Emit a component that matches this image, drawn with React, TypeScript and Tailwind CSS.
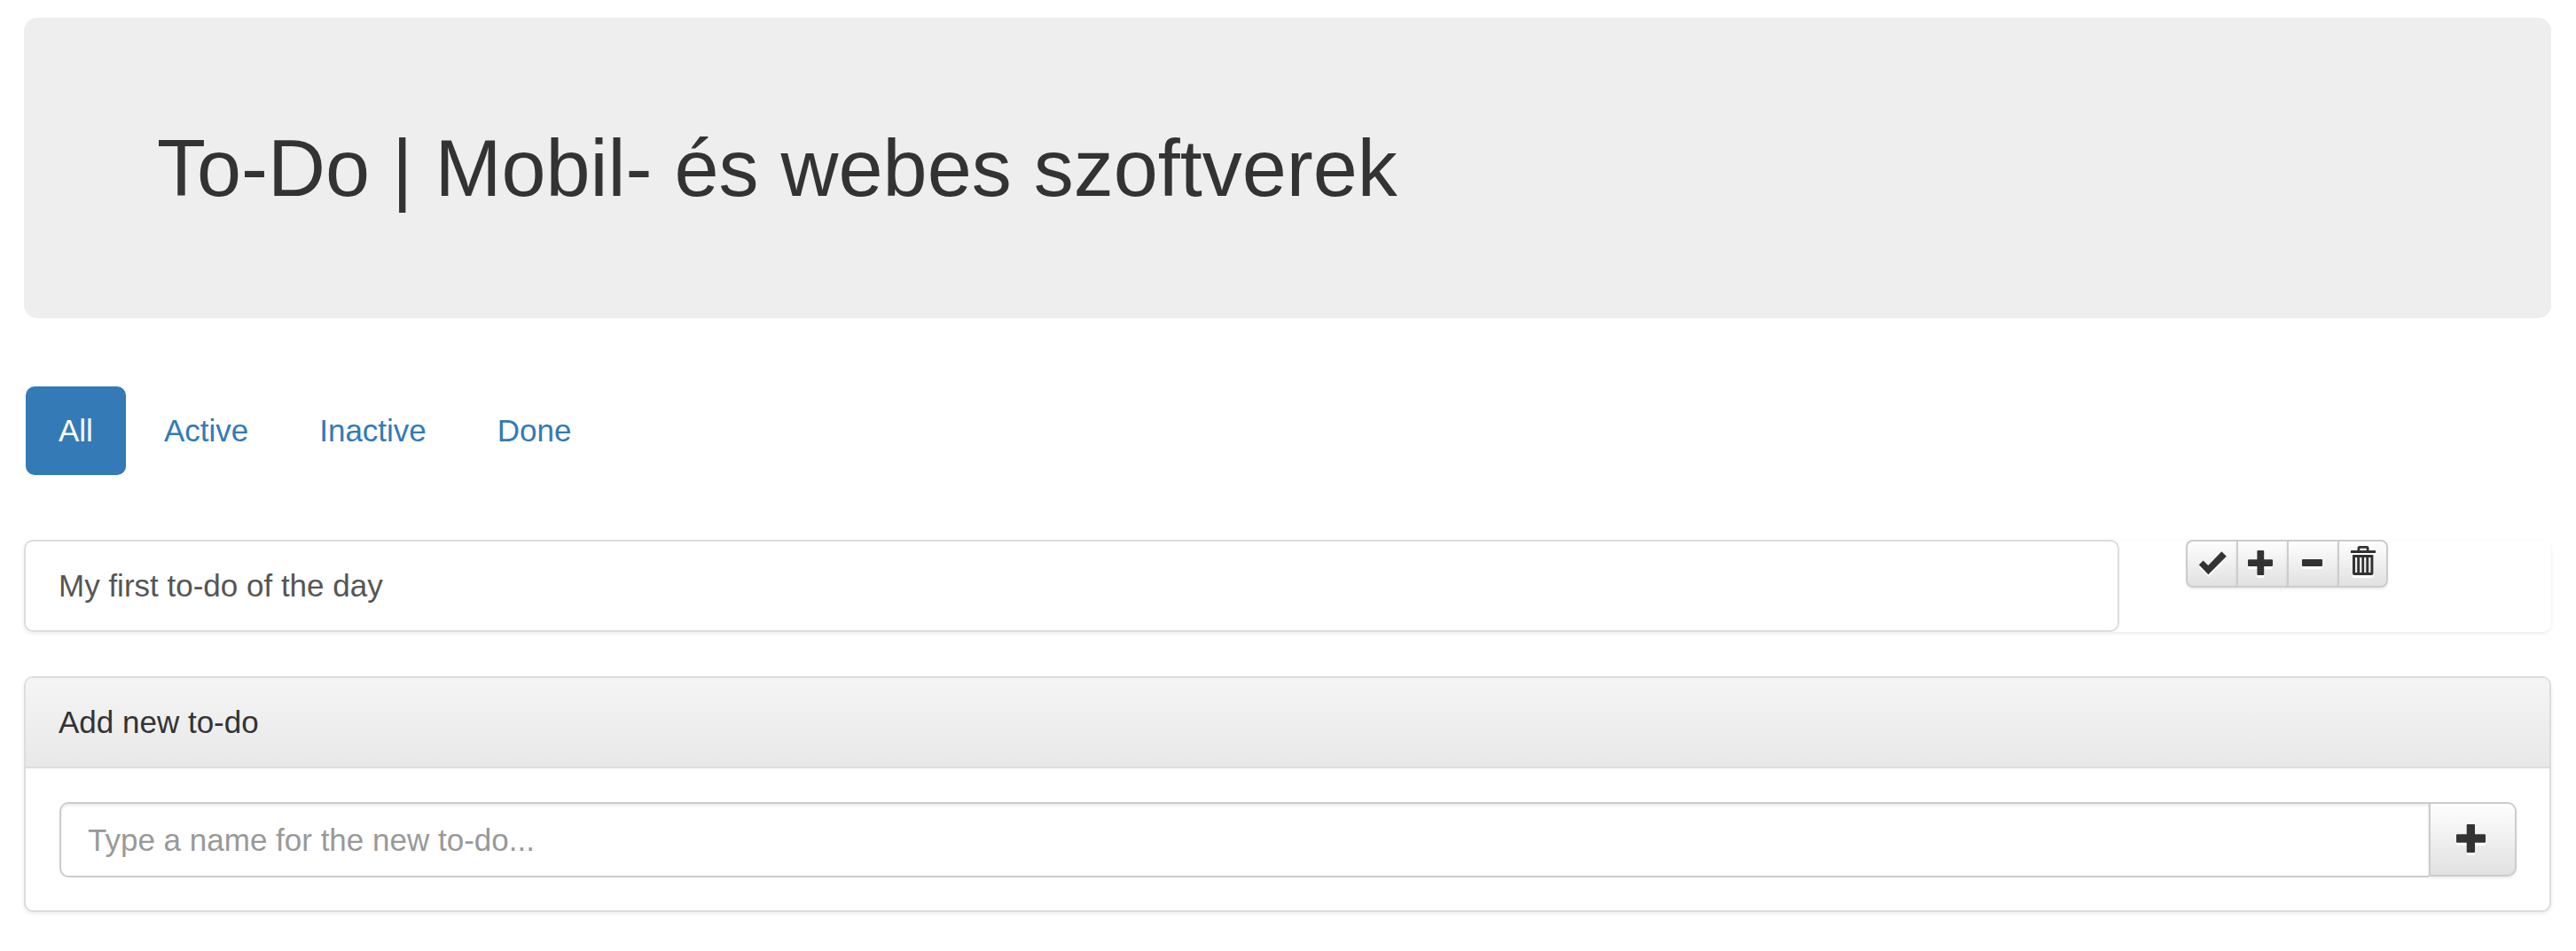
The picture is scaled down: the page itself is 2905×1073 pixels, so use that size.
import { ReactNode, useState } from "react";

const buttonSurface =
  "flex items-start border-[#ccc] bg-linear-to-b from-white to-[#e0e0e0] bg-origin-border text-[#333] shadow-[0_2px_3px_rgba(0,0,0,0.075)] cursor-pointer";

const filters = ["All", "Active", "Inactive", "Done"];

function Glyph({ children }: { children: ReactNode }) {
  return (
    <svg
      viewBox="0 0 55 50"
      fill="currentColor"
      aria-hidden="true"
      className="block h-[50px] w-[55px] shrink-0 drop-shadow-[0_3px_0_#fff]"
    >
      {children}
    </svg>
  );
}

const actions = [
  {
    label: "Mark as done",
    shape: <path d="M12.8 26.3 17.6 21.6 23.2 27 38.4 11.3 43.8 16.8 23.3 37.2z" />,
  },
  {
    label: "Mark as active",
    shape: (
      <path d="M22.4 10h5.8a1 1 0 0 1 1 1v9.2h8.8a1 1 0 0 1 1 1V27a1 1 0 0 1-1 1h-8.8v9a1 1 0 0 1-1 1h-5.8a1 1 0 0 1-1-1v-9H12a1 1 0 0 1-1-1v-5.8a1 1 0 0 1 1-1h9.4V11a1 1 0 0 1 1-1z" />
    ),
  },
  {
    label: "Mark as inactive",
    shape: <rect x="15" y="20" width="23" height="8" rx="1" />,
  },
  {
    label: "Delete",
    shape: (
      <>
        <path d="M13 10h7.5V7.5A2.5 2.5 0 0 1 23 5h8a2.5 2.5 0 0 1 2.5 2.5V10H41v3H13zM23.3 10h7.4V7.8H23.3z" fillRule="evenodd" />
        <path
          d="M15 15h23.4v21a2 2 0 0 1-2 2H17a2 2 0 0 1-2-2zM18 18v17h2.2V18zM23.1 18v17h2.2V18zM28.1 18v17h2.2V18zM33.2 18v17h2.2V18z"
          fillRule="evenodd"
        />
      </>
    ),
  },
];

export default function App() {
  const [filter, setFilter] = useState("All");

  return (
    <main className="min-h-screen bg-white pt-5 pr-7 pl-[27px] font-['Liberation_Sans',Arial,sans-serif] text-[35px] leading-[50px] text-[#333]">
      <header className="rounded-[15px] bg-[#eee] px-[150px] pt-[121px] pb-[119px]">
        <h1 className="text-[90px] leading-[99px] font-medium">To-Do | Mobil- és webes szoftverek</h1>
      </header>

      <nav className="mt-[77px] ml-0.5 flex gap-1.5">
        {filters.map((name) => (
          <a
            key={name}
            href="#"
            onClick={(e) => {
              e.preventDefault();
              setFilter(name);
            }}
            className={
              name === filter
                ? "rounded-[10px] bg-[#337ab7] px-[37px] py-[25px] text-white"
                : "rounded-[10px] px-[37px] py-[25px] text-[#337ab7]"
            }
          >
            {name}
          </a>
        ))}
      </nav>

      <ul className="mt-[73px]">
        <li className="flex items-start gap-[75px] rounded-[10px] shadow-[0_2px_4px_rgba(0,0,0,0.08)]">
          <div className="w-[82.9%] rounded-[10px] border-2 border-[#ddd] bg-white px-[37px] py-[25px] text-[#555]">
            My first to-do of the day
          </div>
          <div className="flex">
            {actions.map(({ label, shape }) => (
              <button
                key={label}
                type="button"
                aria-label={label}
                className={`${buttonSurface} w-[57px] border-y-2 border-l-2 first:rounded-l-[8px] last:rounded-r-[8px] last:border-r-2`}
              >
                <Glyph>{shape}</Glyph>
              </button>
            ))}
          </div>
        </li>
      </ul>

      <section className="mt-[50px] rounded-[10px] border-2 border-[#ddd] bg-white shadow-[0_2px_4px_rgba(0,0,0,0.08)]">
        <div className="rounded-t-[8px] border-b-2 border-[#ddd] bg-linear-to-b from-[#f5f5f5] to-[#e8e8e8] px-[37px] py-[25px]">
          <label htmlFor="new-todo" className="block">
            Add new to-do
          </label>
        </div>
        <form className="flex items-start pt-[38px] pr-[37px] pb-[37px] pl-[38px]" onSubmit={(e) => e.preventDefault()}>
          <input
            id="new-todo"
            type="text"
            placeholder="Type a name for the new to-do..."
            className="h-[85px] min-w-0 flex-1 rounded-l-[10px] border-2 border-r-0 border-[#ccc] bg-white px-[30px] text-[#555] shadow-[inset_0_2px_3px_rgba(0,0,0,0.075)] outline-none placeholder:text-[#999]"
          />
          <button
            type="submit"
            aria-label="Add"
            className={`${buttonSurface} rounded-r-[10px] border-2`}
          >
            <svg
              viewBox="0 0 95 80"
              fill="currentColor"
              aria-hidden="true"
              className="block h-[80px] w-[95px] drop-shadow-[0_3px_0_#fff]"
            >
              <path d="M41.7 23h7.3a1 1 0 0 1 1 1v10.3h11a1 1 0 0 1 1 1v7.4a1 1 0 0 1-1 1H50V54a1 1 0 0 1-1 1h-7.3a1 1 0 0 1-1-1V43.7H30a1 1 0 0 1-1-1v-7.4a1 1 0 0 1 1-1h10.7V24a1 1 0 0 1 1-1z" />
            </svg>
          </button>
        </form>
      </section>
    </main>
  );
}
